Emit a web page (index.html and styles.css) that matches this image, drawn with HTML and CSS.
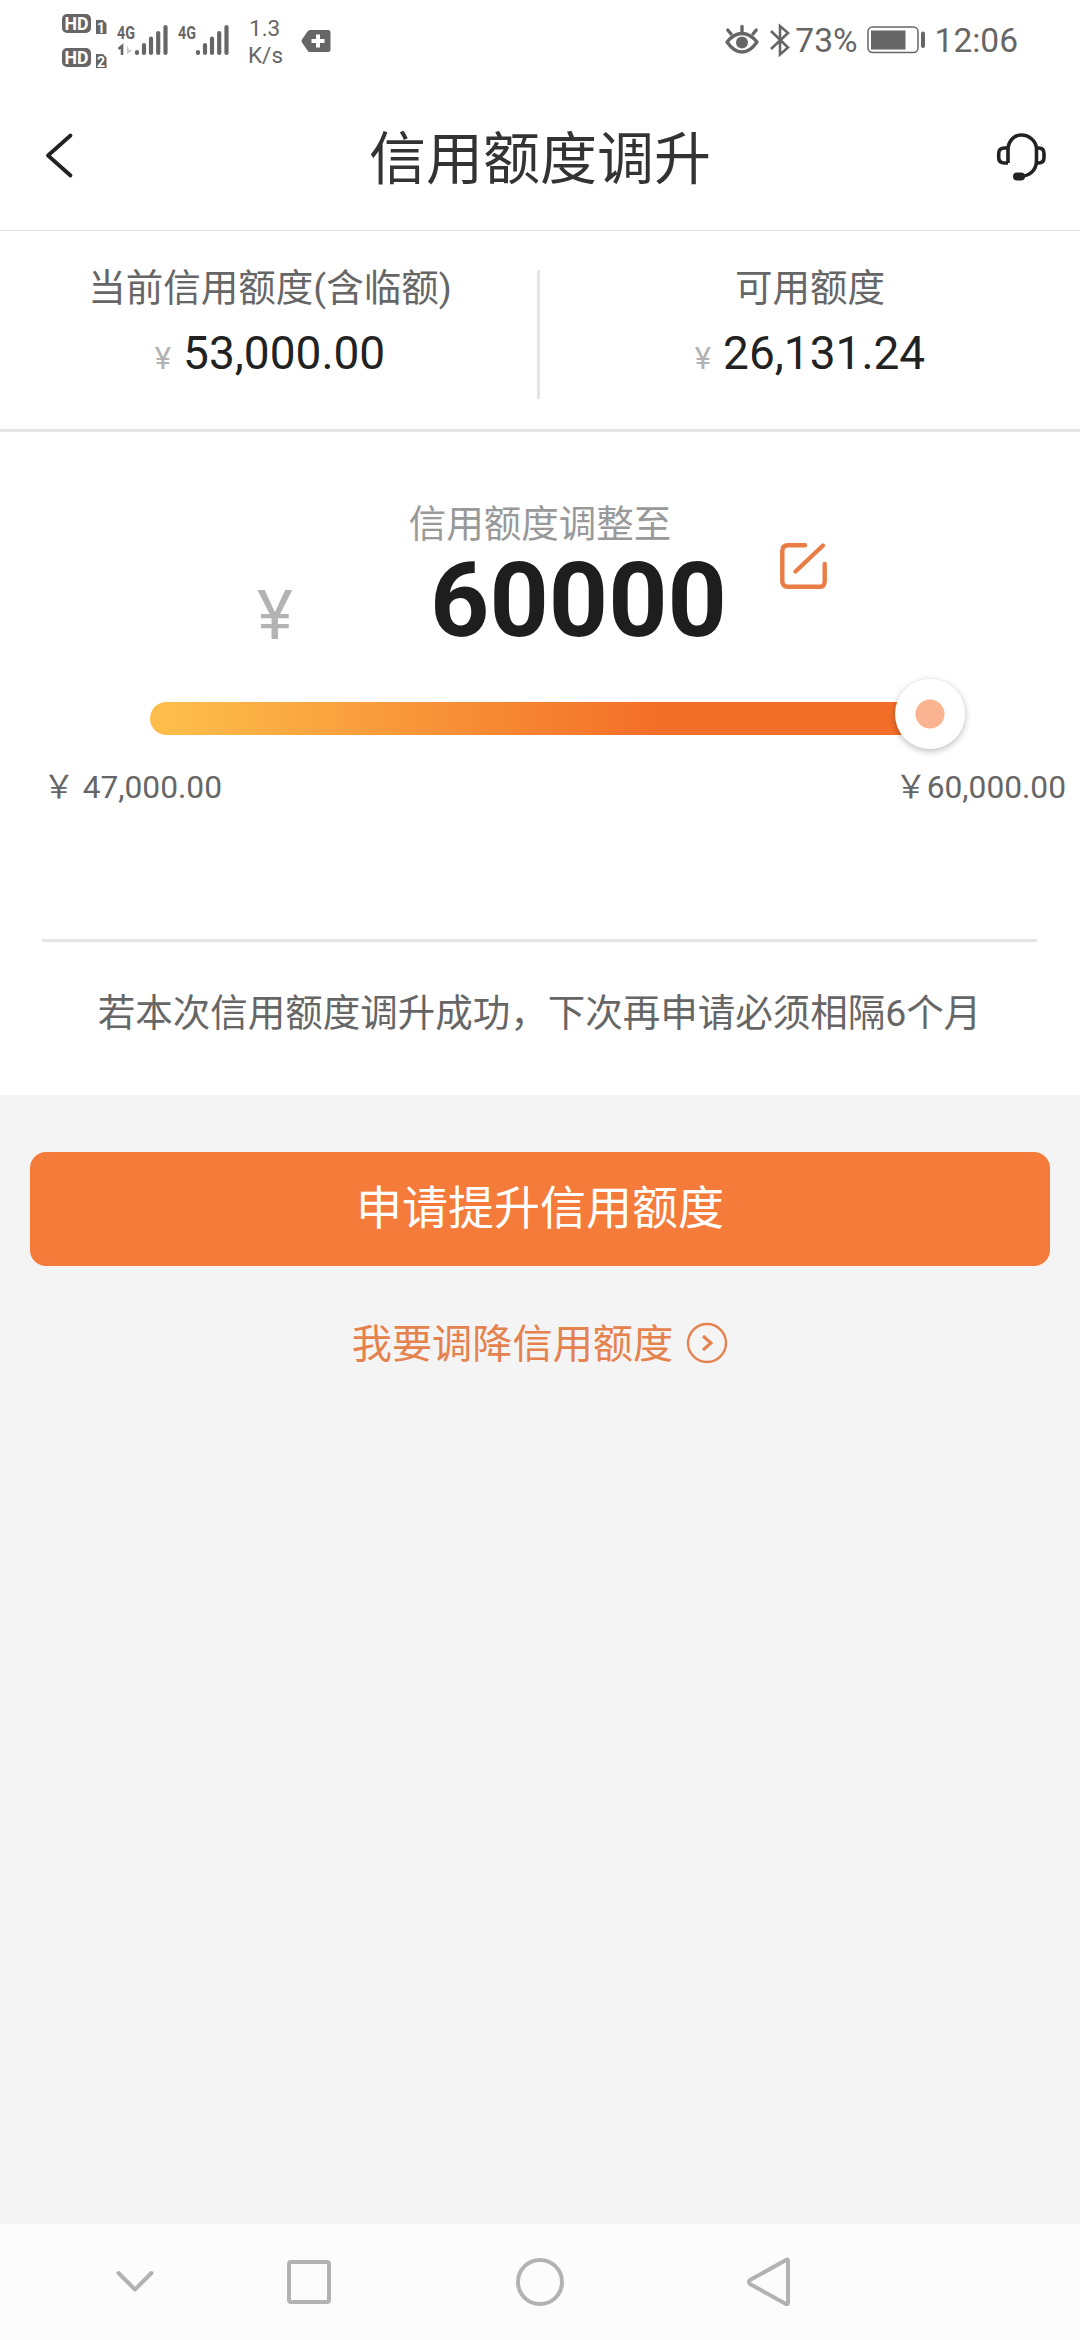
FILE: index.html
```html
<!DOCTYPE html>
<html lang="zh-CN">
<head>
<meta charset="utf-8">
<title>信用额度调升</title>
<link rel="stylesheet" href="styles.css">
</head>
<body>
<div class="status">
  <svg class="status-signal" width="240" height="80" viewBox="0 0 240 80">
    <g fill="#666">
      <rect x="12" y="14" width="29" height="19" rx="5"/>
      <rect x="12" y="48" width="29" height="19" rx="5"/>
      <path d="M46 20h7l3.500 3.500V34H46zM46 54h7l3.500 3.500V68H46z"/>
    </g>
    <g class="badge-text">
      <text x="14.500" y="30" textLength="24" lengthAdjust="spacingAndGlyphs">HD</text>
      <text x="14.500" y="64" textLength="24" lengthAdjust="spacingAndGlyphs">HD</text>
      <text class="sim" x="47" y="32.500">1</text>
      <text class="sim" x="47" y="66.500">2</text>
    </g>
    <g class="net-text">
      <text x="67" y="38.500" textLength="18" lengthAdjust="spacingAndGlyphs">4G</text>
      <text x="128" y="38.500" textLength="18" lengthAdjust="spacingAndGlyphs">4G</text>
    </g>
    <path d="M68.500 49l3.500-3v9" fill="none" stroke="#666" stroke-width="2.600"/>
    <path d="M77 45v9.500l5.500-4.500h-3.500" fill="#ccc"/>
    <g stroke="#666" stroke-width="4.200" stroke-linecap="round">
      <path d="M87 52v1M94 45v8M101 38.500V53M108.200 33v20M115.500 27v26"/>
      <path d="M148 52v1M155 45v8M162 38.500V53M169.200 33v20M176.500 27v26"/>
    </g>
  </svg>
  <div class="speed"><span>1.3</span><span>K/s</span></div>
  <svg class="tag" width="30" height="24" viewBox="0 0 30 24">
    <path d="M9 1h18q2.500 0 2.500 2.500v17q0 2.500-2.500 2.500H9q-1.500 0-2.500-1.500L1 13.500q-1-1.500 0-3L6.500 2.500Q7.500 1 9 1z" fill="#666"/>
    <path d="M17 5.500v13M10.500 12h13" stroke="#fff" stroke-width="4"/>
  </svg>
  <div class="status-right">
    <svg class="eye" width="36" height="34" viewBox="0 0 36 34">
      <g fill="none" stroke="#666" stroke-width="3.400" stroke-linecap="round">
        <path d="M3 20Q10 11.500 18 11.500T33 20Q26 30 18 30T3 20z" stroke-linejoin="round"/>
        <path d="M18 10V4.500M7 12L3.800 8M29 12l3.200-4"/>
      </g>
      <circle cx="18" cy="20.500" r="6" fill="#666"/>
    </svg>
    <svg class="bt" width="22" height="34" viewBox="0 0 22 34">
      <path d="M2 8l17 16.500-8 7V3l8 7L2 26" fill="none" stroke="#666" stroke-width="2.600"/>
    </svg>
    <span class="percent">73%</span>
    <svg class="battery" width="60" height="30" viewBox="0 0 60 30">
      <rect x="1" y="2" width="50" height="25.500" rx="4.500" fill="none" stroke="#666" stroke-width="1.500"/>
      <path d="M4 5.500h34.500v19H4z" fill="#666"/>
      <path d="M56 8.500v12.500" stroke="#666" stroke-width="4" stroke-linecap="round"/>
    </svg>
    <span>12:06</span>
  </div>
</div>

<header class="header">
  <svg class="back" width="32" height="50" viewBox="0 0 32 50">
    <path d="M26.500 4.500L4 24.500l22.500 20" fill="none" stroke="#222" stroke-width="3.800" stroke-linecap="round" stroke-linejoin="round"/>
  </svg>
  <h1>信用额度调升</h1>
  <svg class="service" width="52" height="52" viewBox="0 0 52 52">
    <g fill="none" stroke="#222" stroke-width="3.600">
      <path d="M13 32V17.500C14 8.500 20 4 26.700 4S41 9.500 41.500 17.500v12C41.500 40 34 45 25 45.500"/>
      <path d="M13 17H9.500Q3.700 17 3.700 22.500v4Q3.700 32 9.500 32H13M41.500 17h2Q49 17 49 22.500v4q0 5.500-5.500 5.500h-2"/>
    </g>
    <rect x="18" y="41.500" width="12" height="8" rx="4" fill="#222"/>
  </svg>
</header>

<section class="summary">
  <div class="summary-item">
    <div class="label">当前信用额度(含临额)</div>
    <div class="amount"><span class="yen">¥</span>53,000.00</div>
  </div>
  <div class="summary-item">
    <div class="label">可用额度</div>
    <div class="amount"><span class="yen">¥</span>26,131.24</div>
  </div>
</section>

<main class="adjust">
  <div class="adjust-label">信用额度调整至</div>
  <div class="adjust-value">
    <span class="big-yen">¥</span>
    <span class="number">60000</span>
    <svg class="edit" width="50" height="50" viewBox="0 0 50 50">
      <g fill="none" stroke="#ea7d45" stroke-width="4.400" stroke-linecap="round">
        <path d="M27 4.300H10Q4.300 4.300 4.300 10v30Q4.300 45.700 10 45.700h32Q46.700 45.700 46.700 40V23"/>
        <path d="M17.500 30.500L45 4.500"/>
      </g>
    </svg>
  </div>
  <div class="slider"><div class="thumb"></div></div>
  <div class="range">
    <div class="limit limit-min"><span class="limit-yen">￥</span>47,000.00</div>
    <div class="limit"><span class="limit-yen">￥</span>60,000.00</div>
  </div>
  <p class="note">若本次信用额度调升成功，下次再申请必须相隔6个月</p>
</main>

<section class="actions">
  <button class="apply">申请提升信用额度</button>
  <a class="lower"><span>我要调降信用额度</span>
    <svg width="42" height="42" viewBox="0 0 42 42">
      <g fill="none" stroke="#e5824e" stroke-width="2.400">
        <circle cx="21" cy="21" r="19"/>
        <path d="M17 14l8 7-8 7" stroke-width="3"/>
      </g>
    </svg>
  </a>
</section>

<nav class="nav">
  <svg width="1080" height="116" viewBox="0 0 1080 116">
    <g fill="none" stroke="#b2b2b2" stroke-width="4" stroke-linecap="round" stroke-linejoin="round">
      <path d="M118.500 49L135 65.500 151.500 49"/>
      <rect x="289" y="38" width="40" height="40" rx="2"/>
      <circle cx="540" cy="58" r="22"/>
      <path d="M787 35.500q1 0 1 2v41q0 2-2 1.500L750 60q-2-2 0-4z"/>
    </g>
  </svg>
</nav>
</body>
</html>
```
FILE: styles.css
```css
* { box-sizing: border-box; }
body {
  margin: 0;
  width: 1080px;
  height: 2340px;
  display: flex;
  flex-direction: column;
  overflow: hidden;
  background: #f4f4f4;
  color: #666;
  font-family: Roboto, "Noto Sans CJK SC", sans-serif;
}
svg { display: block; flex: none; }

.status {
  height: 80px;
  padding-left: 50px;
  display: flex;
  background: #fff;
}
.status-signal { margin-right: -42px; }
.badge-text { fill: #fff; font-size: 18px; font-weight: 700; }
.badge-text .sim { font-size: 14px; }
.net-text { fill: #666; font-size: 18.500px; font-weight: 700; }
.speed {
  display: flex;
  flex-direction: column;
  width: 53px;
  padding-top: 15px;
  font-size: 22.5px;
  line-height: 27px;
  text-align: left;
}
.speed span:first-child { padding-left: 1px; }
.tag { margin-top: 29px; }
.status-right {
  flex: 1;
  display: flex;
  justify-content: flex-end;
  padding-right: 62px;
  font-size: 33.5px;
  line-height: 82px;
}
.eye { margin: 22px 9px 0 0; }
.bt { margin: 23px 4px 0 0; }
.battery { margin: 25px 8px 0 9px; }

.header {
  height: 151px;
  padding: 0 33px 0 44px;
  display: flex;
  justify-content: space-between;
  background: #fff;
  border-bottom: 1px solid #e2e2e2;
}
.header h1 {
  margin: 0;
  padding-left: 9px;
  color: #333;
  font-size: 57px;
  font-weight: 400;
  line-height: 160px;
}
.back { margin-top: 51px; }
.service { margin-top: 51px; }

.summary {
  height: 201px;
  display: grid;
  grid-template-columns: 540px 540px;
  background: #fff;
  border-bottom: 3px solid #e5e5e5;
}
.summary-item { padding-top: 31px; text-align: center; }
.summary-item:first-child {
  background: linear-gradient(#e5e5e5, #e5e5e5) right 39px / 3px 129px no-repeat;
}
.label { font-size: 37.500px; line-height: 52px; }
.amount {
  margin-top: 12px;
  color: #222;
  font-size: 46px;
  line-height: 54px;
}
.yen { margin-right: 12px; color: #b3b3b3; font-size: 31px; }

.adjust { height: 663px; background: #fff; }
.adjust-label {
  padding-top: 66px;
  color: #999;
  font-size: 37.500px;
  line-height: 52px;
  text-align: center;
}
.adjust-value {
  display: flex;
  height: 110px;
  padding-left: 257px;
}
.big-yen { width: 173px; color: #b3b3b3; font-size: 68px; line-height: 132px; }
.number {
  width: 348px;
  color: #1e1e1e;
  font-size: 103.500px;
  font-weight: 700;
  line-height: 102px;
}
.edit { margin-top: -9px; }
.slider {
  display: flex;
  align-items: center;
  justify-content: flex-end;
  width: 790px;
  height: 33px;
  margin: 42px 0 0 150px;
  border-radius: 17px;
  background: linear-gradient(90deg, #fdbd4a 0, #fdbd4a 20px, #f36e28 510px, #f36e28 100%);
}
.thumb {
  width: 70px;
  height: 70px;
  margin: -9px -25px 0 0;
  flex: none;
  border-radius: 50%;
  background: radial-gradient(circle, #fab491 14px, #fff 15px);
  box-shadow: 0 2px 7px rgba(0, 0, 0, .28);
}
.range {
  display: flex;
  justify-content: space-between;
  height: 204px;
  padding: 30px 14px 0 43px;
  font-size: 31.700px;
  line-height: 46px;
}
.limit-min .limit-yen { margin-right: 8px; }
.note {
  width: 995px;
  height: 156px;
  margin: 0 0 0 42px;
  padding-top: 45px;
  border-top: 3px solid #e5e5e5;
  font-size: 37.500px;
  line-height: 52px;
  text-align: center;
  white-space: nowrap;
}

.actions {
  flex: 1;
  display: flex;
  flex-direction: column;
  align-items: center;
  padding-top: 57px;
}
.apply {
  width: 1020px;
  height: 114px;
  padding: 0 0 10px;
  border: 0;
  border-radius: 16px;
  background: #f47b3a;
  color: #fff;
  font: inherit;
  font-size: 46px;
}
.lower {
  display: flex;
  align-items: center;
  gap: 13px;
  margin-top: 47px;
  color: #e5824e;
  font-size: 40.200px;
  line-height: 58px;
}
.lower span { padding-top: 3px; }
.lower svg { margin-top: -2px; }
.nav { height: 116px; background: #fcfcfc; }
```
